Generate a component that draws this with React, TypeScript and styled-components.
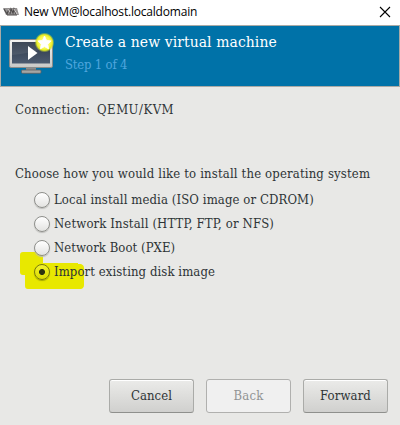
import React from 'react';
import styled, { createGlobalStyle } from 'styled-components';

const GlobalStyle = createGlobalStyle`
  * { box-sizing: border-box; }
  body { margin: 0; background: #e8e8e6; }
`;
const serif = '"DejaVu Serif Condensed", "DejaVu Serif", serif';

const Window = styled.div`
  width: 400px;
  height: 425px;
  display: flex;
  flex-direction: column;
  background: #e8e8e6;
  color: #2e3436;
  font: 13px/24px ${serif};
  overflow: hidden;
`;
const TitleBar = styled.div`
  height: 25px;
  flex: none;
  display: flex;
  align-items: center;
  padding: 0 9px 1px 3px;
  background: #fff;
`;
const WindowTitle = styled.span`
  flex: 1;
  margin-left: 5px;
  color: #000;
  font: 12px/20px "Open Sans", sans-serif;
  letter-spacing: -0.2px;
  white-space: nowrap;
`;
const Banner = styled.header`
  height: 62px;
  flex: none;
  display: flex;
  background: #0072a8;
  border: 1px solid #a9aaa6;
`;
const BannerIcon = styled.svg`
  flex: none;
  margin: 6px 0 0 7px;
`;
const BannerText = styled.div`
  margin: 5px 0 0 8px;
`;
const Label = styled.span<{ $spacing: number }>`
  letter-spacing: ${p => p.$spacing}px;
  white-space: nowrap;
`;
const BannerTitle = styled(Label)`
  display: block;
  color: #fff;
  font-size: 15.5px;
  line-height: 22px;
`;
const BannerStep = styled(Label)`
  display: block;
  color: #4fa6dd;
  line-height: 23px;
`;
const Content = styled.main`
  flex: 1;
  padding: 11px 15px 0;
`;
const Connection = styled.div`
  display: flex;
  gap: 7px;
  height: 64px;
`;
const Question = styled.div`
  height: 26px;
`;
const Options = styled.div`
  padding-left: 19px;
`;
const Option = styled.label`
  height: 24px;
  display: flex;
  align-items: center;
  gap: 4px;
`;
const Radio = styled.span<{ $checked: boolean }>`
  width: 16px;
  height: 16px;
  flex: none;
  position: relative;
  border: 1px solid ${p => (p.$checked ? '#77790f' : '#8e8f8b')};
  border-radius: 50%;
  background: ${p => (p.$checked
    ? 'radial-gradient(circle at 50% 50%, #2e3410 2.6px, transparent 3.4px), linear-gradient(#f2f22c, #dcdc00)'
    : 'linear-gradient(#fff, #e3e3e1)')};
  box-shadow: 0 1px 1px ${p => (p.$checked ? '#a5a700' : '#bdbdba')};
`;
const Marker = styled.svg`
  position: absolute;
  left: 20px;
  top: 252px;
`;
const OptionText = styled(Label)`
  position: relative;
`;
const Footer = styled.footer`
  height: 46px;
  flex: none;
  display: flex;
  justify-content: flex-end;
  gap: 12px;
  padding: 0 12px 12px 0;
`;
const Button = styled.button`
  width: 85px;
  height: 34px;
  padding: 0 0 1px;
  border: 1px solid #aaaba8;
  border-bottom-color: #8f908d;
  border-radius: 3px;
  background: linear-gradient(#ebebe9, #d0d0ce);
  box-shadow: inset 0 1px #fff;
  color: #2e3436;
  font: 13px ${serif};
  &:disabled {
    border-color: #b0b0ae;
    background: #f0f0f0;
    box-shadow: none;
    color: #929494;
  }
`;

const options: [string, number][] = [
  ['Local install media (ISO image or CDROM)', 0.1],
  ['Network Install (HTTP, FTP, or NFS)', 0.13],
  ['Network Boot (PXE)', 0.05],
  ['Import existing disk image', 0.08],
];

export default function App() {
  return (
    <Window>
      <GlobalStyle />
      <TitleBar>
        <svg width="16" height="10" viewBox="0 0 16 10">
          <path d="M0 1h14l2 7H3z" fill="#969393" />
          <path d="M1 2l3 5 2-5M7 7l1-5 2 4 1-4 2 5M4 8h10" fill="none" stroke="#4e4b4b" strokeWidth="1.2" />
          <path d="M5 2l2 3M11 2l3 5" stroke="#d5d0d0" />
        </svg>
        <WindowTitle>New VM@localhost.localdomain</WindowTitle>
        <svg width="12" height="12" viewBox="0 0 12 12">
          <path d="M1 1l10 10M11 1L1 11" stroke="#000" strokeWidth="1.1" />
        </svg>
      </TitleBar>
      <Banner>
        <BannerIcon width="49" height="44" viewBox="8 32 49 44">
          <defs>
            <linearGradient id="screen" x2="0" y2="1">
              <stop stopColor="#2d3848" /><stop offset="1" stopColor="#4d5b70" />
            </linearGradient>
            <linearGradient id="bezel" x2="0" y2="1">
              <stop stopColor="#f4f4f2" /><stop offset="1" stopColor="#c9c9c7" />
            </linearGradient>
            <radialGradient id="glow">
              <stop offset=".55" stopColor="#fbfb58" /><stop offset=".78" stopColor="#e6ec22" />
              <stop offset="1" stopColor="#b4cc30" stopOpacity="0" />
            </radialGradient>
          </defs>
          <path d="M26 67h10v4h-10z" fill="#8d8d8d" />
          <rect x="21.500" y="70" width="19.500" height="3.300" rx="1" fill="#a6a6a4" stroke="#5f5f5f" strokeWidth=".8" />
          <rect x="9.500" y="39.500" width="43" height="28" rx="1.500" fill="url(#bezel)" stroke="#8b8c8a" />
          <rect x="12" y="42" width="38" height="21.500" fill="url(#screen)" />
          <path d="M12 42h38v4Q30 54 12 55z" fill="#fff" opacity=".08" />
          <path d="M28 46v14l9.500-7z" fill="#fff" />
          <circle cx="44.500" cy="42.500" r="10" fill="url(#glow)" />
          <path d="M44.500 36l2 4.300 4.700.6-3.400 3.300.8 4.700-4.100-2.300-4.100 2.300.8-4.700-3.400-3.300 4.700-.6z" fill="#fff" stroke="#fff" strokeWidth=".8" strokeLinejoin="round" />
        </BannerIcon>
        <BannerText>
          <BannerTitle $spacing={0.09}>Create a new virtual machine</BannerTitle>
          <BannerStep $spacing={-0.2}>Step 1 of 4</BannerStep>
        </BannerText>
      </Banner>
      <Content>
        <Connection>
          <Label $spacing={0.32}>Connection:</Label>
          <Label $spacing={0.5}>QEMU/KVM</Label>
        </Connection>
        <Question>
          <Label $spacing={0.16}>Choose how you would like to install the operating system</Label>
        </Question>
        <Marker width="66" height="38" viewBox="0 0 66 38">
          <path d="M3 0H20Q23 0 23 3V11H58V12H61Q64 13 64 16V33Q64 36 61 37H8Q5 37 5 34V23H3Q0 23 0 20V3Q0 0 3 0Z" fill="#e8e800" />
        </Marker>
        <Options>
          {options.map(([text, spacing], i) => (
            <Option key={text}>
              <Radio $checked={i === 3} />
              <OptionText $spacing={spacing}>{text}</OptionText>
            </Option>
          ))}
        </Options>
      </Content>
      <Footer>
        <Button><Label $spacing={0.05}>Cancel</Label></Button>
        <Button disabled><Label $spacing={0.2}>Back</Label></Button>
        <Button><Label $spacing={0.12}>Forward</Label></Button>
      </Footer>
    </Window>
  );
}
